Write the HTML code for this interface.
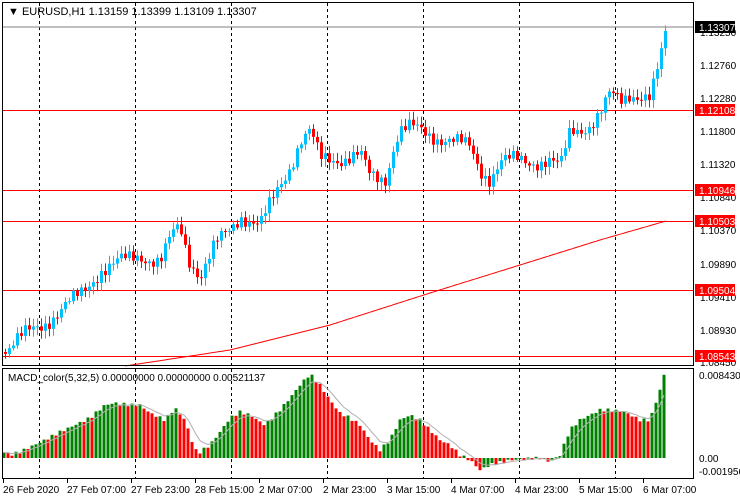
<!DOCTYPE html>
<html><head><meta charset="utf-8"><style>
html,body{margin:0;padding:0;background:#fff;width:740px;height:500px;overflow:hidden}
svg{display:block}
text{font-family:"Liberation Sans",sans-serif;font-size:10px;fill:#000}
</style></head><body>
<svg id="c" width="740" height="500" viewBox="0 0 740 500" xmlns="http://www.w3.org/2000/svg">
<rect x="0" y="0" width="740" height="500" fill="#fff"/>
<g id="grid"></g>
<g id="lines">
<line x1="2" y1="27" x2="694" y2="27" stroke="#808080"/>
<line x1="2" y1="110.5" x2="694" y2="110.5" stroke="#f00"/>
<line x1="2" y1="190.5" x2="694" y2="190.5" stroke="#f00"/>
<line x1="2" y1="221.5" x2="694" y2="221.5" stroke="#f00"/>
<line x1="2" y1="290.5" x2="694" y2="290.5" stroke="#f00"/>
<line x1="2" y1="356.5" x2="694" y2="356.5" stroke="#f00"/>
</g>
<g id="ma"></g>
<g id="candles"></g>
<g id="hist"></g>
<g id="sig"></g>
<rect x="2.5" y="2.5" width="691" height="363" fill="none" stroke="#000"/>
<rect x="2.5" y="368.5" width="691" height="110" fill="none" stroke="#000"/>
<text x="8" y="15" style="font-size:11px">▼ EURUSD,H1  1.13159 1.13399 1.13109 1.13307</text>
<text x="8" y="381" style="font-size:10px">MACD_color(5,32,5) 0.00000000 0.00000000 0.00521137</text>
<g id="axis">
<text x="700" y="36">1.13250</text>
<text x="700" y="69">1.12760</text>
<text x="700" y="102">1.12280</text>
<text x="700" y="135">1.11800</text>
<text x="700" y="168">1.11320</text>
<text x="700" y="201">1.10840</text>
<text x="700" y="234">1.10370</text>
<text x="700" y="268">1.09890</text>
<text x="700" y="301">1.09410</text>
<text x="700" y="334">1.08930</text>
<text x="700" y="366">1.08450</text>
<rect x="695" y="21" width="40" height="12" fill="#000"/><text x="699" y="31" style="fill:#fff">1.13307</text>
<rect x="695" y="104" width="40" height="12" fill="#f00"/><text x="699" y="114" style="fill:#fff">1.12108</text>
<rect x="695" y="184" width="40" height="12" fill="#f00"/><text x="699" y="194" style="fill:#fff">1.10946</text>
<rect x="695" y="215" width="40" height="12" fill="#f00"/><text x="699" y="225" style="fill:#fff">1.10503</text>
<rect x="695" y="284" width="40" height="12" fill="#f00"/><text x="699" y="294" style="fill:#fff">1.09504</text>
<rect x="695" y="350" width="40" height="12" fill="#f00"/><text x="699" y="360" style="fill:#fff">1.08543</text>
<text x="699" y="379">0.0084305</text>
<text x="699" y="462">0.00</text>
<text x="699" y="475">-0.001956</text>
</g>
<g id="time">
<text x="3" y="493">26 Feb 2020</text>
<text x="67" y="493">27 Feb 07:00</text>
<text x="131" y="493">27 Feb 23:00</text>
<text x="195" y="493">28 Feb 15:00</text>
<text x="259" y="493">2 Mar 07:00</text>
<text x="323" y="493">2 Mar 23:00</text>
<text x="387" y="493">3 Mar 15:00</text>
<text x="451" y="493">4 Mar 07:00</text>
<text x="515" y="493">4 Mar 23:00</text>
<text x="579" y="493">5 Mar 15:00</text>
<text x="643" y="493">6 Mar 07:00</text>
</g>
</svg>
<script>
(function(){
var NS="http://www.w3.org/2000/svg";
function el(g,t,a){var e=document.createElementNS(NS,t);for(var k in a)e.setAttribute(k,a[k]);document.getElementById(g).appendChild(e);return e;}
function interp(k,x){for(var i=0;i<k.length-1;i++){if(x<=k[i+1][0]){var t=(x-k[i][0])/(k[i+1][0]-k[i][0]);return k[i][1]+t*(k[i+1][1]-k[i][1]);}}return k[k.length-1][1];}
[39,135,231,327,423,519,615].forEach(function(x){
 el("grid","line",{x1:x+.5,y1:3,x2:x+.5,y2:478,stroke:"#000","stroke-dasharray":"3,3"});
});
[3,67,131,195,259,323,387,451,515,579,643].forEach(function(x){el("grid","line",{x1:x+.5,y1:479,x2:x+.5,y2:483,stroke:"#000"});});
var maK=[[125,366],[230,350],[330,325],[430,293],[520,265],[600,240],[666,221]];
var d="M125 366";for(var x=126;x<=666;x+=2)d+=" L"+x+" "+interp(maK,x).toFixed(1);
el("ma","path",{d:d,fill:"none",stroke:"#f00"});
var cK=[[5,350],[20,338],[45,322],[80,295],[100,270],[120,262],[140,255],[160,262],[172,235],[180,228],[188,258],[200,275],[215,245],[230,230],[240,215],[260,225],[275,195],[290,165],[300,140],[310,132],[320,160],[340,158],[360,155],[370,178],[385,178],[395,140],[400,130],[410,128],[430,135],[450,140],[470,148],[480,170],[490,178],[500,162],[520,160],[550,162],[560,168],[570,130],[590,125],[600,115],[610,95],[620,100],[630,92],[650,100],[660,60],[666,30]];
var prev=352;
for(var cx=5;cx<=666;cx+=4){
 var c=interp(cK,cx)+Math.sin(cx*1.7)*6+Math.cos(cx*0.9)*4;
 if(cx>=662)c=31;
 var o=prev;var up=c<o;
 var tp=Math.min(o,c),bt=Math.max(o,c);
 if(bt-tp<1)bt=tp+1;
 var hi=tp-2-Math.abs(Math.sin(cx*3.1))*6,lo=bt+2+Math.abs(Math.cos(cx*2.3))*6;
 var col=up?"#00bfff":"#f00";
 el("candles","line",{x1:cx+.5,y1:hi.toFixed(1),x2:cx+.5,y2:lo.toFixed(1),stroke:col});
 el("candles","rect",{x:cx-1,y:tp.toFixed(1),width:3,height:(bt-tp).toFixed(1),fill:col});
 prev=c;
}
var hK=[[4,452],[10,455],[20,452],[30,447],[45,440],[60,432],[75,425],[90,418],[105,405],[115,403],[130,405],[140,405],[150,413],[165,420],[175,408],[185,420],[195,450],[200,452],[210,445],[220,432],[230,418],[240,412],[250,415],[265,425],[280,410],[290,398],[300,385],[310,374],[320,385],[330,400],[340,413],[350,418],[360,425],[370,440],[380,450],[390,440],[400,420],[410,415],[420,420],[430,430],[440,440],[450,445],[460,455],[470,460],[480,470],[490,465],[510,460],[540,458],[550,462],[560,455],[570,430],[580,420],[590,415],[600,410],[610,410],[625,412],[640,420],[650,420],[660,390],[664,375]];
var ph=null,vals=[];
for(var hx=4;hx<=664;hx+=4){
 var v=interp(hK,hx)+Math.sin(hx*0.7)*1.5;vals.push([hx,v]);
 var g=(ph===null)||v<ph;
 var hc=g?"#008000":"#f00";
 var y1=Math.min(v,458),y2=Math.max(v,458);
 if(y2-y1<1)y2=y1+1;
 el("hist","rect",{x:hx-1.5,y:y1.toFixed(1),width:3,height:(y2-y1).toFixed(1),fill:hc});
 ph=v;
}
var s=vals[0][1],ds="";
vals.forEach(function(p,i){s=s+(p[1]-s)*0.33;ds+=(i?" L":"M")+p[0]+" "+s.toFixed(1);});
el("sig","path",{d:ds,fill:"none",stroke:"#b0b0b0"});
})();
</script>
</body></html>
